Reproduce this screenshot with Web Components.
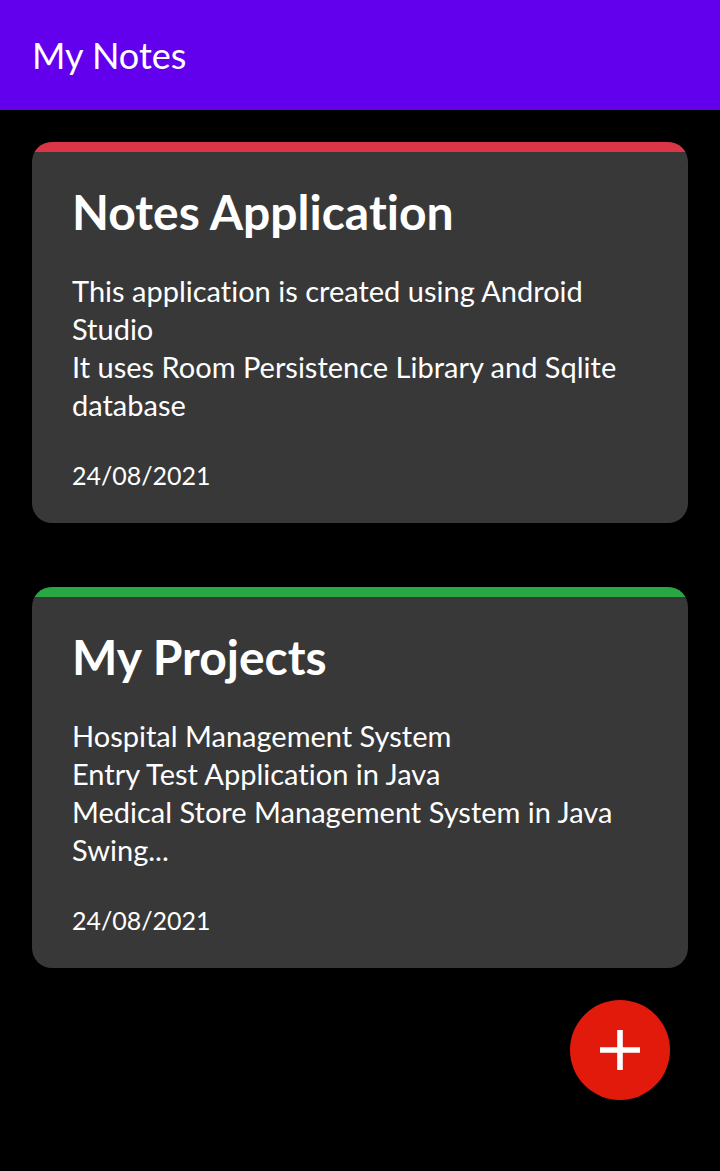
<!DOCTYPE html>
<html lang="en">
<head>
<meta charset="utf-8">
<meta name="viewport" content="width=device-width, initial-scale=1">
<title>My Notes</title>
<style>
html, body { margin: 0; background: #000; }
body { color: #fff; font-family: Lato, "Open Sans", sans-serif; font-variant-ligatures: none; }
</style>
</head>
<body>
<notes-app>
  <app-bar slot="bar">My Notes</app-bar>
  <note-card style="--accent:#dc3545">
    <span slot="title">Notes Application</span>
    <span slot="text">This application is created using Android Studio<br>It uses Room Persistence Library and Sqlite database</span>
    <time slot="date" datetime="2021-08-24">24/08/2021</time>
  </note-card>
  <note-card style="--accent:#28a745">
    <span slot="title">My Projects</span>
    <span slot="text">Hospital Management System<br>Entry Test Application in Java<br>Medical Store Management System in Java Swing...</span>
    <time slot="date" datetime="2021-08-24">24/08/2021</time>
  </note-card>
  <add-button slot="action"></add-button>
</notes-app>
<script>
class ShadowElement extends HTMLElement {
  constructor() {
    super();
    this.attachShadow({ mode: "open" }).innerHTML = this.constructor.markup;
  }
}

class NotesApp extends ShadowElement {
  static markup = `
    <style>
      :host { display: flex; flex-direction: column; min-height: 100vh; }
      main { display: flex; flex-direction: column; gap: 64px; padding: 32px; }
    </style>
    <slot name="bar"></slot>
    <main><slot></slot></main>
    <slot name="action"></slot>`;
}

class AppBar extends ShadowElement {
  static markup = `
    <style>
      :host { display: block; background: #6200ee; }
      header { padding: 32px; }
      h1 { margin: 0; font-size: 36px; line-height: 46px; font-weight: 400; }
    </style>
    <header><h1><slot></slot></h1></header>`;
}

class NoteCard extends ShadowElement {
  static markup = `
    <style>
      :host { display: block; background: #383838; border-radius: 20px; overflow: hidden; }
      .accent { height: 10px; background: var(--accent); }
      article { display: flex; flex-direction: column; gap: 30px; padding: 30px 40px 27px; }
      h2 { margin: 0; font-size: 48px; line-height: 60px; font-weight: 700; }
      p { margin: 0; font-size: 29px; line-height: 38px; }
      .date { font-size: 25px; line-height: 42px; }
    </style>
    <div class="accent"></div>
    <article>
      <h2><slot name="title"></slot></h2>
      <p><slot name="text"></slot></p>
      <p class="date"><slot name="date"></slot></p>
    </article>`;
}

class AddButton extends ShadowElement {
  static markup = `
    <style>
      :host { position: fixed; right: 50px; bottom: 71px; display: block; }
      button { display: grid; place-items: center; width: 100px; height: 100px; padding: 0; border: 0; border-radius: 50%; background: #e11a0c; color: #fff; cursor: pointer; }
      svg { display: block; }
    </style>
    <button type="button" aria-label="Add note">
      <svg width="40" height="40" viewBox="0 0 40 40" aria-hidden="true"><path fill="currentColor" d="M17.2 0h5.6v17.2H40v5.6H22.8V40h-5.6V22.8H0v-5.6h17.2z"/></svg>
    </button>`;
}

customElements.define("notes-app", NotesApp);
customElements.define("app-bar", AppBar);
customElements.define("note-card", NoteCard);
customElements.define("add-button", AddButton);
</script>
</body>
</html>
